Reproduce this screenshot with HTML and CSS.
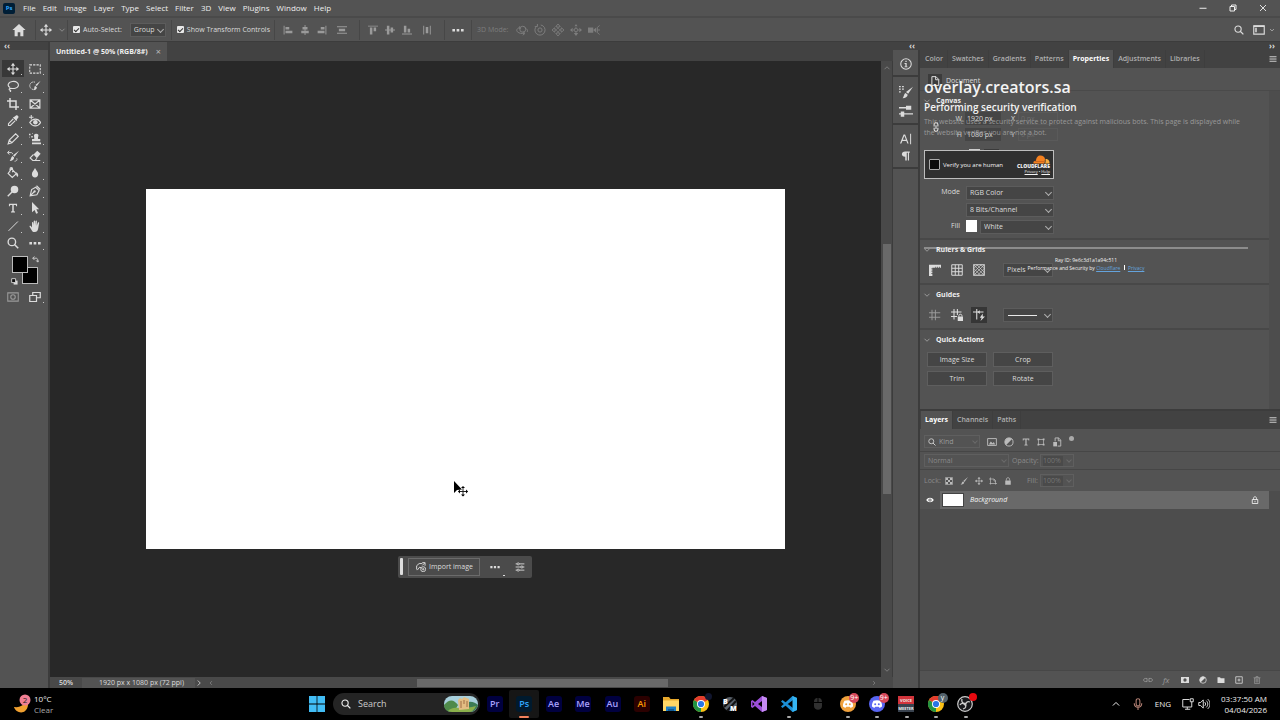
FILE: index.html
```html
<!DOCTYPE html>
<html lang="en">
<head>
  <meta charset="UTF-8" />
  <meta name="viewport" content="width=device-width, initial-scale=1.0"/>
  <title>Untitled-1 @ 50% (RGB/8#)</title>
  <link rel="stylesheet" href="styles.css">
</head>
<body>

<!-- icon sprite -->
<svg class="sprite" xmlns="http://www.w3.org/2000/svg" aria-hidden="true">
  <symbol id="home" viewBox="0 0 16 16"><path d="M8 1 0.500 8H3v7h3.500v-4.500h3V15H13V8h2.500z" fill="currentColor"/></symbol>
  <symbol id="move" viewBox="0 0 16 16"><path d="M8 1v14M1 8h14" stroke="currentColor" stroke-width="1.500"/><path d="M8 0 5 3.500h6zM8 16l-3-3.500h6zM0 8l3.500-3v6zM16 8l-3.500-3v6z" fill="currentColor"/></symbol>
  <symbol id="chev" viewBox="0 0 16 16"><path d="M3 5.500 8 10.500l5-5" fill="none" stroke="currentColor" stroke-width="1.600"/></symbol>
  <symbol id="al-left" viewBox="0 0 16 16"><path d="M1 1h1.500v14H1zM4 3h6v4H4zM4 9h11v4H4z" fill="currentColor"/></symbol>
  <symbol id="al-center" viewBox="0 0 16 16"><path d="M7.300 0h1.500v16H7.300zM4 3h8v4H4zM2 9h12v4H2z" fill="currentColor"/></symbol>
  <symbol id="al-right" viewBox="0 0 16 16"><path d="M13.500 1H15v14h-1.500zM6 3h6v4H6zM1 9h11v4H1z" fill="currentColor"/></symbol>
  <symbol id="dist-h" viewBox="0 0 16 16"><path d="M0 2h16v1.500H0zM3 6h10v4H3zM0 12.500h16V14H0z" fill="currentColor"/></symbol>
  <symbol id="al-top" viewBox="0 0 16 16"><path d="M0 1h16v1.500H0zM3 4h4v11H3zM9 4h4v6H9z" fill="currentColor"/></symbol>
  <symbol id="al-mid" viewBox="0 0 16 16"><path d="M0 7.300h16v1.500H0zM3 1h4v14H3zM9 4h4v8H9z" fill="currentColor"/></symbol>
  <symbol id="al-bot" viewBox="0 0 16 16"><path d="M0 13.500h16V15H0zM3 1h4v11H3zM9 6h4v6H9z" fill="currentColor"/></symbol>
  <symbol id="dist-v" viewBox="0 0 16 16"><path d="M2 1h1.500v14H2zM6 3h4v10H6zM12.500 1H14v14h-1.500z" fill="currentColor"/></symbol>
  <symbol id="dots" viewBox="0 0 16 16"><path d="M0.500 6.500h3.500v3.500H0.500zM6.200 6.500h3.500v3.500H6.200zM12 6.500h3.500v3.500H12z" fill="currentColor"/></symbol>
  <symbol id="orbit" viewBox="0 0 16 16"><g fill="none" stroke="currentColor" stroke-width="1.300"><circle cx="9" cy="7" r="4"/><path d="M4.500 5C1 6 0 8.500 2 10.500s6 2.500 9 2M12 5.500c3 1 4 3 3 5"/><path d="m9 10 3 2.500-3 2.500M5 3l-1 2.500 2.500 1"/></g></symbol>
  <symbol id="roll" viewBox="0 0 16 16"><g fill="none" stroke="currentColor" stroke-width="1.300"><circle cx="8" cy="8" r="2.800"/><path d="M4 2.500a6.800 6.800 0 1 0 5-1.200M4.500 0v3.500H1"/></g></symbol>
  <symbol id="pan" viewBox="0 0 16 16"><path d="m8 0 3 3.500H9v2L8 6.500l-1-1v-2H5zM8 16l3-3.500H9v-2L8 9.500l-1 1v2H5zM0 8l3.500-3v2h2l1 1-1 1h-2v2zM16 8l-3.500-3v2h-2l-1 1 1 1h2v2z" fill="none" stroke="currentColor" stroke-width="1.200"/></symbol>
  <symbol id="slide" viewBox="0 0 16 16"><path d="m8 0 2 3H6zM8 16l3-4H5zM0 8l3.500-3v6zM16 8l-3.500-3v6z" fill="currentColor"/><path d="m8 5 3 3-3 3-3-3z" fill="none" stroke="currentColor" stroke-width="1.400"/></symbol>
  <symbol id="cam" viewBox="0 0 16 16"><path d="M0 4.500h7v7H0zM7 8l4-3.500v7z" fill="currentColor"/><path d="m15.500 2-3 2.500v7l3 2.500M12.500 8H16" fill="none" stroke="currentColor" stroke-width="1.200"/></symbol>
  <symbol id="search" viewBox="0 0 16 16"><circle cx="6.500" cy="6.500" r="5" fill="none" stroke="currentColor" stroke-width="1.800"/><path d="m10 10 5 5" stroke="currentColor" stroke-width="2"/></symbol>
  <symbol id="workspace" viewBox="0 0 16 16"><path d="M1 2.500h14v11H1z" fill="none" stroke="currentColor" stroke-width="1.500"/><path d="M3 5h2v6H3zM1 2h14v2H1z" fill="currentColor"/></symbol>
  <symbol id="marquee" viewBox="0 0 16 16"><path d="M1 2.500h14v11H1z" fill="none" stroke="currentColor" stroke-width="1.400" stroke-dasharray="3 1.500"/></symbol>
  <symbol id="lasso" viewBox="0 0 16 16"><path d="M4 10C0 8 1 3 7 2s9 3 8 6-6 4-10 3c-2 0-3 2-1 2.500 1.500.5 1 1.500 0 2.500" fill="none" stroke="currentColor" stroke-width="1.500"/></symbol>
  <symbol id="quicksel" viewBox="0 0 16 16"><path d="M8 3a5 5 0 1 0-1 9.500" fill="none" stroke="currentColor" stroke-width="1.300" stroke-dasharray="2 1"/><path d="m15.500 1-5 7-2-1.500zM8 7.500l2.500 2c0 2.500-2 4-4.500 4 1.500-1 .5-4 2-6z" fill="currentColor"/></symbol>
  <symbol id="crop" viewBox="0 0 16 16"><path d="M4 0v12h12M0 4h12v12" fill="none" stroke="currentColor" stroke-width="2"/></symbol>
  <symbol id="frame" viewBox="0 0 16 16"><path d="M1.500 2.500h13v11h-13zM2 3l12 10M14 3 2 13" fill="none" stroke="currentColor" stroke-width="1.600"/></symbol>
  <symbol id="dropper" viewBox="0 0 16 16"><path d="m9 3 4 4M8.500 5 2 11.500V14h2.500L11 7.500" fill="none" stroke="currentColor" stroke-width="1.500"/><path d="m8 3 1.500-.5L12 .5c2-1 4 1 3 3l-2 2.500-.5 2z" fill="currentColor"/></symbol>
  <symbol id="redeye" viewBox="0 0 16 16"><path d="M1 10c4-6 11-6 14.500 0-3.500 6-10.500 6-14.500 0z" fill="none" stroke="currentColor" stroke-width="1.600"/><circle cx="8.500" cy="9.500" r="3" fill="currentColor"/><path d="M3 0v6M0 3h6" stroke="currentColor" stroke-width="1.400"/></symbol>
  <symbol id="pencil" viewBox="0 0 16 16"><path d="m1.500 14.500 1.500-5L11.500 1l3.500 3.500L6.500 13zM3 9.500 6.500 13" fill="none" stroke="currentColor" stroke-width="1.500"/></symbol>
  <symbol id="stamp" viewBox="0 0 16 16"><path d="M9.500 1c3 0 4 2 2.500 4.500V8h3v3H4V8h3V5.500C6 3 7 1 9.500 1zM4 12.500h12V15H4z" fill="currentColor"/><path d="M0 1h2v2H0zM3 4h2v2H3zM0 5h1v1H0zM4 0h1v1H4z" fill="currentColor"/></symbol>
  <symbol id="histbrush" viewBox="0 0 16 16"><path d="m16 1-6 8-2-2zM7.500 8l2 2c0 3-2.500 4.500-6 4.500 2-1.500 1.500-5 4-6.500z" fill="currentColor"/><path d="M1 3.500h4.500c1 0 2 .5 2 2M3 1 .8 3.500 3 6" fill="none" stroke="currentColor" stroke-width="1.300"/><path d="M10 15c3 0 4-2 3-4" fill="none" stroke="currentColor"/></symbol>
  <symbol id="eraser" viewBox="0 0 16 16"><path d="m6 6 5-5 4.500 4-5 6z" fill="currentColor"/><path d="M6 6 1.500 10.500 5 14h3l2.500-3M8 14h7" fill="none" stroke="currentColor" stroke-width="1.500"/></symbol>
  <symbol id="bucket" viewBox="0 0 16 16"><path d="M6 2.500 12.500 9 7 14 1.500 8.500zM4 7V3c0-3 3.500-3 3.500 0v4" fill="none" stroke="currentColor" stroke-width="1.500"/><path d="M12 7c3 1 3.500 4 2.500 6-2 .5-2.500-3-2.500-6z" fill="currentColor"/></symbol>
  <symbol id="drop" viewBox="0 0 16 16"><path d="M8 0c2 4 5 6 5 10 0 3-2 5-5 5s-5-2-5-5c0-4 3-6 5-10z" fill="currentColor"/></symbol>
  <symbol id="dodge" viewBox="0 0 16 16"><circle cx="10" cy="6" r="5" fill="currentColor"/><path d="m7 9-6 6" stroke="currentColor" stroke-width="2"/></symbol>
  <symbol id="pen" viewBox="0 0 16 16"><path d="m1.500 14.500 2-8.500L9 3l4.500 4.500-3 5.500zM1.500 14.500 7 9M10 1l5 5" fill="none" stroke="currentColor" stroke-width="1.500"/><circle cx="7.500" cy="8.500" r="1.500" fill="currentColor"/></symbol>
  <symbol id="type" viewBox="0 0 16 16"><path d="M1.500 1h13v4H13l-.5-2H9.200v10l2 .6V15H4.800v-1.400l2-.6V3H3.500L3 5H1.500z" fill="currentColor"/></symbol>
  <symbol id="arrow" viewBox="0 0 16 16"><path d="m4 0 9.500 9.500H9.800L12 14.500l-2.500 1-2-5L4 13.500z" fill="currentColor"/></symbol>
  <symbol id="line" viewBox="0 0 16 16"><path d="M2 14.500 14.500 2" stroke="currentColor" stroke-width="1.300"/></symbol>
  <symbol id="hand" viewBox="0 0 16 16"><path d="M4 8V3.500c0-1.200 1.600-1.200 1.800 0L6.300 7V1.500c0-1.200 1.800-1.200 1.900 0V7l.6-5.500c.2-1.200 1.800-1 1.700.2L10.300 7.500l1.500-4c.5-1.200 2-.6 1.700.6L12.500 10c-.5 4-2 6-5 6-2.500 0-3.500-1.500-4.500-3.500L.8 9C.2 7.800 1.600 7 2.500 8L4 10z" fill="currentColor"/></symbol>
  <symbol id="swap" viewBox="0 0 16 16"><path d="M2 5h7c3 0 4 2 4 4v4M5.500 1 1.500 5l4 4M9.500 10l3.500 4 3-4" fill="none" stroke="currentColor" stroke-width="2"/></symbol>
  <symbol id="defaults" viewBox="0 0 16 16"><path d="M6 6h9v9H6z" fill="currentColor"/><path d="M1.500 1.500h9v9h-9z" fill="#111" stroke="currentColor" stroke-width="2"/></symbol>
  <symbol id="quickmask" viewBox="0 0 16 16"><path d="M1 2.500h14v11H1z" fill="none" stroke="currentColor" stroke-width="1.400"/><circle cx="8" cy="8" r="3" fill="none" stroke="currentColor" stroke-width="1.500"/></symbol>
  <symbol id="screens" viewBox="0 0 16 16"><path d="M5 2h10v7H5z" fill="none" stroke="currentColor" stroke-width="1.600"/><path d="M1 6h9v8H1z" fill="#535353" stroke="currentColor" stroke-width="1.600"/></symbol>
  <symbol id="info" viewBox="0 0 16 16"><circle cx="8" cy="8" r="7" fill="none" stroke="currentColor" stroke-width="1.400"/><path d="M7.200 3.500h1.700v1.700H7.200zM6 6.700h2.900v4.500H10v1.200H6v-1.200h1.200V8H6z" fill="currentColor"/></symbol>
  <symbol id="brushes" viewBox="0 0 16 16"><path d="m16 2-5.500 8-2.500-2zM7.500 9l2.500 2c-.5 2.500-2.500 4-6 4 2-1.500 1-4.500 3.500-6zM0 1h2v1.500H0zM3.500 1h2v1.500h-2zM0 4h2v1.500H0zM3.500 4h2v1.500h-2zM0 7h2v1.500H0z" fill="currentColor"/></symbol>
  <symbol id="brushset" viewBox="0 0 16 16"><path d="M0 3.500h8V2h6v4.500H8V5H0zM0 10.500h2V8.500h4v2h10V12H6v2.500H2V12H0z" fill="currentColor"/></symbol>
  <symbol id="char" viewBox="0 0 16 16"><path d="M0 14 4.800 2h2L11.500 14H9.800l-1.300-3.500H3.200L1.800 14zm3.700-5H8L5.800 3.500zM13.500 1h1.300v14h-1.300z" fill="currentColor"/></symbol>
  <symbol id="para" viewBox="0 0 16 16"><path d="M13 2H7C1 2 1 9 7 9v5h2V3.500h1.500V14h1.500V3.500h1z" fill="currentColor"/></symbol>
  <symbol id="doc" viewBox="0 0 16 16"><path d="M3 1h6.500L14 5.500V15H3zM9 1v5h5" fill="none" stroke="currentColor" stroke-width="1.600"/></symbol>
  <symbol id="link" viewBox="0 0 16 16"><path d="M5 7V4c0-4 6-4 6 0v3M5 9v3c0 4 6 4 6 0V9M8 5v6" fill="none" stroke="currentColor" stroke-width="1.800"/></symbol>
  <symbol id="ruler" viewBox="0 0 16 16"><path d="M0 1h16v4h-1.500V3.500h-1V5H12V3.500h-1V5H9.500V3.500h-1V5H4.500v1H3v1h1.500v2H3v1h1.500v2H3v1h1.500v3H0z" fill="currentColor"/></symbol>
  <symbol id="grid" viewBox="0 0 16 16"><path d="M1 1h14v14H1zM5.700 1v14M10.300 1v14M1 5.700h14M1 10.300h14" fill="none" stroke="currentColor" stroke-width="1.300"/></symbol>
  <symbol id="checker" viewBox="0 0 16 16"><path d="M1 1h14v14H1z" fill="none" stroke="currentColor" stroke-width="1.400"/><path d="m1 6 5-5M1 11 11 1M1 15 15 1M6 15l9-9M11 15l4-4M10 1l5 5M5 1l10 10M1 1l14 14M1 6l9 9M1 11l4 4" stroke="currentColor" stroke-width=".8"/></symbol>
  <symbol id="guides" viewBox="0 0 16 16"><path d="M4 1v14M8.500 1v14M0 5h15M0 11h15" stroke="currentColor" stroke-width="1.300"/></symbol>
  <symbol id="guidelock" viewBox="0 0 16 16"><path d="M4 0v14M8.500 0v8M0 4h14M0 10h8" stroke="currentColor" stroke-width="1.400"/><path d="M9 10h7v6H9z" fill="currentColor"/><path d="M10.500 10V8.500c0-2 4-2 4 0V10" fill="none" stroke="currentColor" stroke-width="1.300"/></symbol>
  <symbol id="smart" viewBox="0 0 16 16"><path d="M5 0v14M0 4h14" fill="none" stroke="currentColor" stroke-width="1.400"/><path d="M9 1.500v5L6 4z" fill="currentColor"/><path d="m13 6-4 5.500h2.500L10 16l6-6h-3z" fill="currentColor"/></symbol>
  <symbol id="image" viewBox="0 0 16 16"><path d="M1 2.500h14v11H1z" fill="none" stroke="currentColor" stroke-width="1.500"/><path d="m3 12 3-5 3 3 2-2 2 4z" fill="currentColor"/></symbol>
  <symbol id="adjust" viewBox="0 0 16 16"><circle cx="8" cy="8" r="6.500" fill="none" stroke="currentColor" stroke-width="1.500"/><path d="M12.600 3.400A6.500 6.500 0 0 0 3.400 12.600z" fill="currentColor"/></symbol>
  <symbol id="shape" viewBox="0 0 16 16"><path d="M3 3h10v10H3z" fill="none" stroke="currentColor" stroke-width="1.400"/><path d="M1 1h3.500v3.500H1zM11.500 1H15v3.500h-3.500zM1 11.500h3.500V15H1zM11.500 11.500H15V15h-3.500z" fill="currentColor"/></symbol>
  <symbol id="smartobj" viewBox="0 0 16 16"><path d="M5 7V1.500h5.500L14 5v9.500H9M10 1v5h4" fill="none" stroke="currentColor" stroke-width="1.500"/><path d="M2 8h6v7H2z" fill="currentColor"/></symbol>
  <symbol id="pixels" viewBox="0 0 16 16"><path d="M1 1h14v14H1z" fill="none" stroke="currentColor" stroke-width="1.300"/><path d="M2 2h4v4H2zM10 2h4v4h-4zM6 6h4v4H6zM2 10h4v4H2zM10 10h4v4h-4z" fill="currentColor"/></symbol>
  <symbol id="brush" viewBox="0 0 16 16"><path d="m16 0-7 10-2.500-2zM6 9l2.500 2.200C8 14 5 15.500 1 15.500 4 14 3 10 6 9z" fill="currentColor"/></symbol>
  <symbol id="artboard" viewBox="0 0 16 16"><path d="M3 1v14M0 4h10l3 3v8M1 13h15M10 4v4h4" fill="none" stroke="currentColor" stroke-width="1.400"/></symbol>
  <symbol id="lock" viewBox="0 0 16 16"><path d="M2.500 7h11v8.500h-11z" fill="currentColor"/><path d="M4.800 7V4.500c0-4 6.400-4 6.400 0V7" fill="none" stroke="currentColor" stroke-width="1.700"/></symbol>
  <symbol id="lock-o" viewBox="0 0 16 16"><path d="M2.500 7h11v8h-11zM5 7V4.500c0-4 6-4 6 0V7M8 9.500v3" fill="none" stroke="currentColor" stroke-width="1.700"/></symbol>
  <symbol id="eye" viewBox="0 0 16 16"><path d="M.5 8C4 2 12 2 15.500 8 12 14 4 14 .5 8z" fill="currentColor"/><circle cx="8" cy="8" r="3.200" fill="#535353"/><circle cx="8" cy="8" r="1.500" fill="currentColor"/></symbol>
  <symbol id="chain" viewBox="0 0 16 16"><path d="M7 5.500H4c-4 0-4 5 0 5h3M9 5.500h3c4 0 4 5 0 5H9M5 8h6" fill="none" stroke="currentColor" stroke-width="1.400"/></symbol>
  <symbol id="mask" viewBox="0 0 16 16"><path fill-rule="evenodd" d="M0 2h16v12H0zM8 4.700a3.300 3.300 0 1 0 0 6.600 3.300 3.300 0 0 0 0-6.600z" fill="currentColor"/></symbol>
  <symbol id="folder" viewBox="0 0 16 16"><path d="M1 2.500h5l1.500 2H15V14H1z" fill="currentColor"/></symbol>
  <symbol id="plus" viewBox="0 0 16 16"><path d="M1.500 1.500h13v13h-13zM8 5v6M5 8h6" fill="none" stroke="currentColor" stroke-width="1.600"/></symbol>
  <symbol id="trash" viewBox="0 0 16 16"><path d="M3 4h10v11H3zM1 3.500h14M6 3V1h4v2M6 6v7M8 6v7M10 6v7" fill="none" stroke="currentColor" stroke-width="1.300"/></symbol>
  <symbol id="import" viewBox="0 0 16 16"><path d="M1 12V6l4-3.500h5M2 13l4-5 3 2M10 1h4.500v5M14 1.500l-4 4" fill="none" stroke="currentColor" stroke-width="1.500"/><circle cx="11.500" cy="11.500" r="4" fill="none" stroke="currentColor" stroke-width="1.400"/><path d="M11.500 9.500v4M9.500 11.500h4" stroke="currentColor" stroke-width="1.300"/></symbol>
  <symbol id="sliders" viewBox="0 0 16 16"><path d="M1 3h14M1 8h14M1 13h14" stroke="currentColor" stroke-width="1.400"/><g fill="#464646" stroke="currentColor" stroke-width="1.300"><circle cx="5" cy="3" r="1.700"/><circle cx="11" cy="8" r="1.700"/><circle cx="5" cy="13" r="1.700"/></g></symbol>
  <symbol id="burger" viewBox="0 0 16 16"><path d="M1 3h14M1 6.300h14M1 9.600h14M1 13h14" stroke="currentColor" stroke-width="2"/></symbol>
  <symbol id="chrome" viewBox="0 0 16 16"><circle cx="8" cy="8" r="8" fill="#fbc116"/><path d="M8 8 8 16A8 8 0 0 1 1.070 4z" fill="#229342"/><path d="M1.070 4A8 8 0 0 1 14.930 4L8 8z" fill="#e33b2e"/><circle cx="8" cy="8" r="4" fill="#fff"/><circle cx="8" cy="8" r="3.100" fill="#2a75e6"/></symbol>
  <symbol id="discord" viewBox="0 0 16 16"><circle cx="8" cy="8" r="8" fill="currentColor"/><path d="M4.500 4.800C6.500 4 9.500 4 11.500 4.800c1.300 2 1.700 4 1.500 5.700-1 .8-2 1.200-2.700 1.200l-.6-1H6.300l-.6 1c-.8 0-1.700-.4-2.700-1.200-.2-1.800.3-3.800 1.500-5.700z" fill="#fff"/><circle cx="6.200" cy="8.300" r="1" fill="currentColor"/><circle cx="9.800" cy="8.300" r="1" fill="currentColor"/></symbol>
</svg>

<header>
  <nav class="menubar">
    <span class="ps-logo">Ps</span>
    <a href="#">File</a>
    <a href="#">Edit</a>
    <a href="#">Image</a>
    <a href="#">Layer</a>
    <a href="#">Type</a>
    <a href="#">Select</a>
    <a href="#">Filter</a>
    <a href="#">3D</a>
    <a href="#">View</a>
    <a href="#">Plugins</a>
    <a href="#">Window</a>
    <a href="#">Help</a>
    <div class="window-btns">
      <button aria-label="Minimize"><svg viewBox="0 0 16 16"><path d="M1 8.500h14" stroke="currentColor" stroke-width="2"/></svg></button>
      <button aria-label="Restore"><svg viewBox="0 0 16 16"><path d="M2 5h9v9H2zM5 5V2h9v9h-3" fill="none" stroke="currentColor" stroke-width="2"/></svg></button>
      <button aria-label="Close"><svg viewBox="0 0 16 16"><path d="m2 2 12 12M14 2 2 14" stroke="currentColor" stroke-width="1.800"/></svg></button>
    </div>
  </nav>

  <div class="options">
    <div class="opt-group home"><button aria-label="Home"><svg class="i14"><use href="#home"/></svg></button></div>
    <div class="opt-group tool"><svg class="i12"><use href="#move"/></svg><svg class="i8 dim"><use href="#chev"/></svg></div>
    <div class="opt-group">
      <label class="check"><input type="checkbox" checked> Auto-Select:</label>
      <span class="select group"><select aria-label="Auto-Select"><option>Group</option></select></span>
    </div>
    <div class="opt-group transform">
      <label class="check"><input type="checkbox" checked> Show Transform Controls</label>
    </div>
    <div class="opt-group icons dim">
      <button aria-label="Align left"><svg><use href="#al-left"/></svg></button>
      <button aria-label="Align centers"><svg><use href="#al-center"/></svg></button>
      <button aria-label="Align right"><svg><use href="#al-right"/></svg></button>
      <button class="wide" aria-label="Distribute"><svg><use href="#dist-h"/></svg></button>
    </div>
    <div class="opt-group icons dim">
      <button aria-label="Align top"><svg><use href="#al-top"/></svg></button>
      <button aria-label="Align middle"><svg><use href="#al-mid"/></svg></button>
      <button aria-label="Align bottom"><svg><use href="#al-bot"/></svg></button>
      <button class="wide" aria-label="Distribute vertically"><svg><use href="#dist-v"/></svg></button>
    </div>
    <div class="opt-group more"><button aria-label="More"><svg class="i12"><use href="#dots"/></svg></button></div>
    <div class="opt-group mode3d">
      <span>3D Mode:</span>
      <div class="icons">
        <button aria-label="Orbit"><svg class="i12"><use href="#orbit"/></svg></button>
        <button aria-label="Roll"><svg class="i12"><use href="#roll"/></svg></button>
        <button aria-label="Pan"><svg class="i12"><use href="#pan"/></svg></button>
        <button aria-label="Slide"><svg class="i12"><use href="#slide"/></svg></button>
        <button aria-label="Camera"><svg class="i12"><use href="#cam"/></svg></button>
      </div>
    </div>
    <div class="opt-right">
      <button aria-label="Search"><svg><use href="#search"/></svg></button>
      <button aria-label="Workspace"><svg class="i12"><use href="#workspace"/></svg><svg class="i6"><use href="#chev"/></svg></button>
    </div>
  </div>
</header>

<main>
  <aside class="toolbar">
    <div class="strip-head">‹‹</div>
    <div class="tools">
      <button class="on" aria-label="Move"><svg class="i12"><use href="#move"/></svg></button>
      <button aria-label="Marquee"><svg class="i12"><use href="#marquee"/></svg></button>
      <button aria-label="Lasso"><svg class="i12"><use href="#lasso"/></svg></button>
      <button aria-label="Quick selection"><svg class="i12"><use href="#quicksel"/></svg></button>
      <button aria-label="Crop"><svg class="i12"><use href="#crop"/></svg></button>
      <button class="solo" aria-label="Frame"><svg class="i12"><use href="#frame"/></svg></button>
      <button aria-label="Eyedropper"><svg class="i12"><use href="#dropper"/></svg></button>
      <button aria-label="Red eye"><svg class="i12"><use href="#redeye"/></svg></button>
      <button aria-label="Pencil"><svg class="i12"><use href="#pencil"/></svg></button>
      <button aria-label="Clone stamp"><svg class="i12"><use href="#stamp"/></svg></button>
      <button aria-label="History brush"><svg class="i12"><use href="#histbrush"/></svg></button>
      <button aria-label="Eraser"><svg class="i12"><use href="#eraser"/></svg></button>
      <button aria-label="Paint bucket"><svg class="i12"><use href="#bucket"/></svg></button>
      <button aria-label="Blur"><svg><use href="#drop"/></svg></button>
      <button aria-label="Dodge"><svg class="i12"><use href="#dodge"/></svg></button>
      <button aria-label="Pen"><svg class="i12"><use href="#pen"/></svg></button>
      <button aria-label="Type"><svg><use href="#type"/></svg></button>
      <button aria-label="Path selection"><svg class="i12"><use href="#arrow"/></svg></button>
      <button aria-label="Line"><svg class="i12"><use href="#line"/></svg></button>
      <button aria-label="Hand"><svg class="i12"><use href="#hand"/></svg></button>
      <button class="solo" aria-label="Zoom"><svg class="i12"><use href="#search"/></svg></button>
      <button aria-label="Edit toolbar"><svg class="i12"><use href="#dots"/></svg></button>
    </div>
    <div class="swatches">
      <span class="swatch bg"></span>
      <span class="swatch fg"></span>
      <svg class="swap"><use href="#swap"/></svg>
      <svg class="defaults"><use href="#defaults"/></svg>
    </div>
    <div class="tools modes">
      <button class="solo" aria-label="Quick mask"><svg class="i12 dim"><use href="#quickmask"/></svg></button>
      <button aria-label="Screen mode"><svg class="i12"><use href="#screens"/></svg></button>
    </div>
  </aside>

  <section class="document">
    <div class="doc-tabs">
      <div class="doc-tab">Untitled-1 @ 50% (RGB/8#) <button aria-label="Close tab">×</button></div>
    </div>
    <div class="workarea">
      <div class="stage">
        <div class="artboard">
          <svg class="cursor" viewBox="0 0 16 16"><path d="M1 0v12l3-3 5-.5z"/><path d="M10 6v9M5.500 10.500h9" stroke="#222"/><path d="m10 5 2 2H8zM10 15.500l2-2H8zM5 10.500l2-2v4zM15 10.500l-2-2v4z"/></svg>
          <div class="context-bar">
            <span class="grip"></span>
            <button class="import"><svg><use href="#import"/></svg>Import image</button>
            <button class="more" aria-label="More options"><svg><use href="#dots"/></svg></button>
            <button aria-label="Properties"><svg><use href="#sliders"/></svg></button>
          </div>
        </div>
      </div>
      <div class="vscroll"><svg class="i8 up"><use href="#chev"/></svg><span class="thumb"></span><svg class="i8"><use href="#chev"/></svg></div>
    </div>
    <footer class="status">
      <span class="zoom">50%</span>
      <span class="size">1920 px x 1080 px (72 ppi)</span>
      <svg class="i8 right"><use href="#chev"/></svg>
      <div class="hscroll"><svg class="i6 left"><use href="#chev"/></svg><span class="thumb"></span><svg class="i6 right"><use href="#chev"/></svg></div>
    </footer>
  </section>

  <aside class="dock">
    <div class="dock-head"><span>‹‹</span><span>››</span></div>
    <div class="dock-body">
      <div class="icon-strip">
        <div><svg class="i12"><use href="#info"/></svg></div>
        <div><svg class="i14"><use href="#brushes"/></svg><svg class="i14"><use href="#brushset"/></svg></div>
        <div><svg class="i12"><use href="#char"/></svg><svg class="i12"><use href="#para"/></svg></div>
      </div>

      <div class="panels">
        <section class="panel properties">
          <div class="tabs">
            <button>Color</button>
            <button>Swatches</button>
            <button>Gradients</button>
            <button>Patterns</button>
            <button class="active">Properties</button>
            <button>Adjustments</button>
            <button>Libraries</button>
            <svg class="i8 panel-menu"><use href="#burger"/></svg>
          </div>
          <div class="doc-row"><span class="doc-icon"><svg><use href="#doc"/></svg></span>Document</div>
          <div class="prop-scroll">
            <div class="prop canvas-prop">
              <h3><svg class="i8"><use href="#chev"/></svg>Canvas</h3>
              <div class="dims">
                <svg class="link"><use href="#link"/></svg>
                <label for="cw">W</label><input id="cw" value="1920 px">
                <label for="cx">X</label><input id="cx" class="ghost" value="0 px">
                <label for="ch">H</label><input id="ch" value="1080 px">
                <label for="cy">Y</label><input id="cy" class="ghost" value="0 px">
              </div>
              <div class="orient"><span></span><span></span></div>
              <div class="fields">
                <label for="mode">Mode</label>
                <span class="select"><select id="mode"><option>RGB Color</option></select></span>
                <span class="select second"><select aria-label="Bit depth"><option>8 Bits/Channel</option></select></span>
                <label for="fill">Fill</label>
                <div class="fill-row"><span class="fill-swatch"></span><span class="select"><select id="fill"><option>White</option></select></span></div>
              </div>
            </div>
            <div class="prop">
              <h3><svg class="i8"><use href="#chev"/></svg>Rulers &amp; Grids</h3>
              <div class="icon-row">
                <svg class="i12"><use href="#ruler"/></svg>
                <svg class="i12"><use href="#grid"/></svg>
                <svg class="i12"><use href="#checker"/></svg>
                <span class="select"><select aria-label="Ruler units"><option>Pixels</option></select></span>
              </div>
            </div>
            <div class="prop">
              <h3><svg class="i8"><use href="#chev"/></svg>Guides</h3>
              <div class="icon-row">
                <svg class="i12 dim"><use href="#guides"/></svg>
                <svg class="i12"><use href="#guidelock"/></svg>
                <svg class="i12 on"><use href="#smart"/></svg>
                <span class="select line"><select aria-label="Guide style"><option></option></select></span>
              </div>
            </div>
            <div class="prop">
              <h3><svg class="i8"><use href="#chev"/></svg>Quick Actions</h3>
              <div class="actions">
                <button>Image Size</button>
                <button>Crop</button>
                <button>Trim</button>
                <button>Rotate</button>
              </div>
            </div>
          </div>

          <!-- transparent browser overlay, sits over the panel -->
          <div class="overlay">
            <h1>overlay.creators.sa</h1>
            <h2>Performing security verification</h2>
            <p>This website uses a security service to protect against malicious bots. This page is displayed while the website verifies you are not a bot.</p>
            <div class="verify">
              <label><input type="checkbox"> Verify you are human</label>
              <div class="cf">
                <svg viewBox="0 0 34 18"><path d="M1 17c-1-4 2-6 5-5C6 5 10 1 15 1c5 0 8 3 9 7l-1 9z" fill="#f48120"/><path d="M24 17c2-4 1-6 1-9 5-1 9 4 8 9z" fill="#faad3f"/><path d="M3 13h18l2-2" fill="none" stroke="#a94f18"/></svg>
                <b>CLOUDFLARE</b>
                <span><a href="#">Privacy</a> • <a href="#">Help</a></span>
              </div>
            </div>
            <hr>
            <small>Ray ID: 9e6c3d1a1a94c511</small>
            <small>Performance and Security by <a href="#">Cloudflare</a> <i></i> <a href="#">Privacy</a></small>
          </div>
        </section>

        <section class="panel layers">
          <div class="tabs">
            <button class="active">Layers</button>
            <button>Channels</button>
            <button>Paths</button>
            <svg class="i8 panel-menu"><use href="#burger"/></svg>
          </div>
          <div class="layer-row filter">
            <span class="select kind"><svg class="i8"><use href="#search"/></svg><select aria-label="Filter kind"><option>Kind</option></select></span>
            <div class="filter-icons">
              <svg><use href="#image"/></svg>
              <svg><use href="#adjust"/></svg>
              <svg class="i8"><use href="#type"/></svg>
              <svg class="i8"><use href="#shape"/></svg>
              <svg><use href="#smartobj"/></svg>
            </div>
            <span class="toggle"></span>
          </div>
          <div class="layer-row blend">
            <span class="select"><select aria-label="Blend mode"><option>Normal</option></select></span>
            <label for="opacity">Opacity:</label>
            <span class="select pct"><input id="opacity" value="100%"></span>
          </div>
          <div class="layer-row locks">
            <span>Lock:</span>
            <div class="lock-icons">
              <svg class="i8"><use href="#pixels"/></svg>
              <svg class="i8"><use href="#brush"/></svg>
              <svg class="i8"><use href="#move"/></svg>
              <svg class="i8"><use href="#artboard"/></svg>
              <svg class="i8"><use href="#lock"/></svg>
            </div>
            <label for="fillpct">Fill:</label>
            <span class="select pct"><input id="fillpct" value="100%"></span>
          </div>
          <div class="layer-list">
            <div class="layer">
              <button aria-label="Toggle visibility"><svg class="i8"><use href="#eye"/></svg></button>
              <div class="layer-item"><span class="thumb"></span><em>Background</em><svg class="i8"><use href="#lock-o"/></svg></div>
            </div>
          </div>
          <div class="layer-foot">
            <svg class="dim"><use href="#chain"/></svg>
            <i class="dim">fx</i>
            <svg class="i8"><use href="#mask"/></svg>
            <svg class="i8"><use href="#adjust"/></svg>
            <svg class="i8"><use href="#folder"/></svg>
            <svg class="i8"><use href="#plus"/></svg>
            <svg class="i8 dim"><use href="#trash"/></svg>
          </div>
        </section>
      </div>
    </div>
  </aside>
</main>

<div class="taskbar">
  <div class="weather">
    <svg viewBox="0 0 18 20"><path d="M12 5c1 4-3 9-11 8 2 7 13 8 14-2 0-3-1-5-3-6z" fill="#f0a030"/><circle cx="12" cy="6" r="5.500" fill="#f07f93"/><text x="12" y="9" text-anchor="middle">2</text></svg>
    <div>10°C<br><span>Clear</span></div>
  </div>
  <div class="task-center">
    <button class="start" aria-label="Start"><svg viewBox="0 0 16 16"><path d="M0 0h7.600v7.600H0zM8.400 0H16v7.600H8.400zM0 8.400h7.600V16H0zM8.400 8.400H16V16H8.400z" fill="#42bdf5"/></svg></button>
    <label class="search-box"><svg><use href="#search"/></svg><input type="text" placeholder="Search" aria-label="Search">
      <svg class="castle" viewBox="0 0 34 16"><rect width="34" height="16" rx="8" fill="#a8d0dc"/><path d="M0 9C6 2 10 4 14 9l-4 7H7C3 16 0 13 0 9z" fill="#4f8a4a"/><path d="M20 8c5-4 11-2 14 1-1 4-4 7-8 7h-8z" fill="#3c7c56"/><path d="M4 15C9 9 18 14 32 10c-2 4-4 6-7 6H8z" fill="#8bb04c"/><path d="M14 4l2-2 2 1 2-2 5 2v10l-10 1z" fill="#e3bd83"/><path d="M17 5v7M20 4v4M23 5v6" stroke="#a06d45"/></svg>
    </label>
    <div class="apps">
      <a href="#" class="adobe pr">Pr</a>
      <a href="#" class="adobe psd current">Ps</a>
      <a href="#" class="adobe ae">Ae</a>
      <a href="#" class="adobe ae">Me</a>
      <a href="#" class="adobe ae">Au</a>
      <a href="#" class="adobe ai">Ai</a>
      <a href="#" aria-label="Files"><svg viewBox="0 0 16 16"><path d="M0 1h6l1.500 2H16v12H0z" fill="#e8a92c"/><path d="M0 4.500h16V15H0z" fill="#ffd766"/><path d="M3 10.500h10V15H3z" fill="#1f7fc4"/><path d="M5 13h6v2H5z" fill="#0f5a94"/></svg></a>
      <a href="#" class="open" aria-label="Chrome"><svg><use href="#chrome"/></svg><span class="badge dark"></span></a>
      <a href="#" aria-label="BM"><svg viewBox="0 0 16 16"><circle cx="8" cy="8" r="7" fill="#58606a"/><path d="m2 11 10-9M5 15 14 5" stroke="#111" stroke-width="2"/><text class="bm" x="1" y="8">B</text><text class="bm" x="8" y="15">M</text></svg></a>
      <a href="#" aria-label="Visual Studio"><svg viewBox="0 0 16 16"><path d="M11 0 16 2v12l-5 2L4 10l-2.500 2L0 11V5l1.500-1L4 6zM11 5 7 8l4 3zM1.500 6v4l2-2z" fill="#9b4fd8" fill-rule="evenodd"/><path d="M11 0 16 2v12l-5 2z" fill="#c58af3"/></svg></a>
      <a href="#" class="open" aria-label="VS Code"><svg viewBox="0 0 16 16"><path d="M11.500 0 16 2v12l-4.500 2L0 5.500 1.500 4 12 12V4L1.500 12 0 10.500z" fill="#1c8fd6"/><path d="M11.500 0 16 2v12l-4.500 2z" fill="#35b4f2"/></svg></a>
      <a href="#" aria-label="Mouse"><svg viewBox="0 0 16 16"><path d="M4 7h8v3c0 5-8 5-8 0zM4 6c0-4 3-4 3.500-4v4zM12 6c0-4-3-4-3.500-4v4z" fill="#303030"/></svg></a>
      <a href="#" class="open orange" aria-label="Discord PTB"><svg><use href="#discord"/></svg><span class="badge">9+</span></a>
      <a href="#" class="open blurple" aria-label="Discord"><svg><use href="#discord"/></svg><span class="badge">9+</span></a>
      <a href="#" class="open" aria-label="Voicemeeter"><svg viewBox="0 0 16 16"><path d="M0 0h16v8H0z" fill="#d2343b"/><path d="M0 8h16v8H0z" fill="#39424e"/><text class="vm" x="8" y="6" text-anchor="middle">VOICE</text><text class="vm" x="8" y="14" text-anchor="middle">MEETER</text></svg></a>
      <a href="#" class="open" aria-label="Chrome profile"><svg><use href="#chrome"/></svg><span class="badge grey">y</span></a>
      <a href="#" class="open" aria-label="OBS"><svg viewBox="0 0 16 16"><circle cx="8" cy="8" r="7.300" fill="#17181b" stroke="#ccc" stroke-width="1.200"/><path d="M5 3c-1 3 1 5 4 4M13 6c-3-1-5 1-4 4M6 13c3-1 4-3 1-5M3 9c1-2 3-2 4-1" fill="none" stroke="#ccc" stroke-width="1.300"/></svg><span class="badge rec"></span></a>
    </div>
  </div>
  <div class="tray">
    <svg class="up"><use href="#chev"/></svg>
    <svg class="i12 mic" viewBox="0 0 16 16"><path d="M5.500 8V3.500c0-3.500 5-3.500 5 0V8c0 3.500-5 3.500-5 0zM3 7c0 7 10 7 10 0M8 12.500V16" fill="none" stroke="#b98578" stroke-width="1.400"/></svg>
    <span>ENG</span>
    <div class="net">
      <svg class="i12" viewBox="0 0 16 16"><path d="M10 2H1v10h12V8M4 15h7M7 12v3M11 1h4v4h-4zM13 5v3" fill="none" stroke="#ddd" stroke-width="1.300"/></svg>
      <svg class="i12" viewBox="0 0 16 16"><path d="M1 6v4h2.500L7 13.500v-11L3.500 6zM9 5.500c1.500 1.500 1.500 3.500 0 5M11 3.500c2.700 2.700 2.700 6.300 0 9M13 1.500c4 4 4 9 0 13" fill="none" stroke="#ddd" stroke-width="1.300"/></svg>
    </div>
    <div class="clock">03:37:50 AM<br>04/04/2026</div>
  </div>
</div>

</body>
</html>
```
FILE: styles.css
```css
:root {
  --panel: #535353;
  --dark: #424242;
  --line: #3c3c3c;
  --field: #454545;
  --text: #dcdcdc;
  --dim: #9a9a9a;
}

* { box-sizing: border-box; }

body {
  margin: 0;
  height: 100vh;
  display: flex;
  flex-direction: column;
  overflow: hidden;
  font: 7px/10px "Open Sans", "Noto Sans", sans-serif;
  color: var(--text);
  background: var(--panel);
}

button, input, select {
  font: inherit;
  color: inherit;
  background: none;
  border: 0;
  padding: 0;
  margin: 0;
  min-width: 0;
}

button {
  display: flex;
  align-items: center;
  justify-content: center;
}

select { appearance: none; width: 100%; outline: none; }

a { color: inherit; text-decoration: none; }

h1, h2, h3, p { margin: 0; }

svg { width: 10px; height: 10px; flex: none; display: block; }
svg.i6 { width: 6px; height: 6px; }
svg.i8 { width: 8px; height: 8px; }
svg.i12 { width: 12px; height: 12px; }
svg.i14 { width: 14px; height: 14px; }

.sprite { display: none; }
.dim { color: var(--dim); }
.up { transform: rotate(180deg); }
.left { transform: rotate(90deg); }
.right { transform: rotate(-90deg); }

/* menu bar */
.menubar {
  display: flex;
  align-items: center;
  gap: 7px;
  height: 16px;
  padding: 0 2px 0 3px;
  font-size: 8px;
  color: #eee;
}

.ps-logo {
  width: 12px;
  height: 11px;
  margin-right: 1px;
  border-radius: 2px;
  background: #001e36;
  color: #31a8ff;
  font-size: 6px;
  font-weight: bold;
  text-align: center;
}

.window-btns { margin-left: auto; display: flex; }
.window-btns button { width: 30px; height: 14px; }
.window-btns svg { width: 8px; height: 8px; }

/* options bar */
.options {
  display: flex;
  align-items: center;
  height: 26px;
  border-top: 2px solid #4a4a4a;
  border-bottom: 1px solid var(--line);
}

.opt-group {
  display: flex;
  align-items: center;
  height: 20px;
  padding: 0 5px;
  border-right: 1px solid #474747;
}

.opt-group.home { padding: 0 9px 0 12px; }
.opt-group.tool { gap: 6px; padding: 0 1px 0 4px; }
.opt-group.transform { padding-right: 4px; }
.opt-group.more { padding: 0 7px; }
.icons { display: flex; padding: 0 5px; }
.icons button { width: 17px; height: 16px; }
.icons .wide { width: 23px; }
.mode3d { border: 0; color: #7d7d7d; }
.mode3d .icons button { width: 18px; }

.check { display: flex; align-items: center; gap: 3px; white-space: nowrap; }

.check input {
  appearance: none;
  width: 7px;
  height: 7px;
  border-radius: 1px;
  background: #e8e8e8;
}

.check input:checked::before {
  content: "";
  display: block;
  width: 4px;
  height: 2px;
  margin: 2px 1px;
  border: solid #333;
  border-width: 0 0 1px 1px;
  transform: rotate(-45deg);
}

.opt-right { margin-left: auto; display: flex; gap: 9px; padding-right: 5px; }
.opt-right button { gap: 4px; }

/* drop-downs */
.select {
  position: relative;
  display: flex;
  align-items: center;
  height: 14px;
  padding-left: 3px;
  background: var(--field);
  border: 1px solid #5c5c5c;
}

.select::after {
  content: "";
  position: absolute;
  right: 2px;
  top: 3px;
  width: 4px;
  height: 4px;
  border: solid #b0b0b0;
  border-width: 0 1px 1px 0;
  transform: rotate(45deg);
  pointer-events: none;
}

.select.group { width: 36px; margin-left: 8px; }

main { flex: 1; min-height: 0; display: flex; background: var(--line); }

/* left toolbar */
.toolbar {
  width: 48px;
  margin-right: 2px;
  background: var(--panel);
}

.strip-head, .dock-head {
  height: 8px;
  padding: 0 4px;
  background: var(--dark);
  font-size: 8px;
  line-height: 7px;
  font-weight: bold;
}

.tools {
  display: grid;
  grid-template-columns: 22px 22px;
  grid-template-rows: repeat(11, 1fr);
  height: 192px;
  margin: 10px 2px 0;
}

.tools button { position: relative; }
.tools .on { background: #383838; }

.tools button:not(.solo)::after {
  content: "";
  position: absolute;
  right: 2px;
  bottom: 2px;
  width: 1px;
  height: 1px;
  background: #ccc;
}

.swatches { position: relative; height: 32px; margin: 4px 6px 0 8px; }
.swatch { position: absolute; width: 16px; height: 17px; background: #000; border: 1px solid #bbb; }
.swatch.fg { left: 4px; top: 0; }
.swatch.bg { left: 14px; top: 11px; }
.swap { position: absolute; width: 7px; height: 7px; left: 24px; top: 0; }
.defaults { position: absolute; width: 7px; height: 7px; left: 3px; top: 22px; }

.tools.modes { grid-template-rows: 16px; height: 16px; margin-top: 1px; }

/* document window */
.document { flex: 1; min-width: 0; display: flex; flex-direction: column; }
.doc-tabs { height: 19px; display: flex; background: var(--dark); }

.doc-tab {
  display: flex;
  align-items: center;
  gap: 8px;
  padding: 0 6px;
  background: var(--panel);
  color: #f0f0f0;
  font-weight: bold;
}

.doc-tab button { font-size: 9px; font-weight: normal; color: #bbb; }

.workarea { flex: 1; display: flex; min-height: 0; }

.stage {
  flex: 1;
  display: flex;
  align-items: center;
  justify-content: center;
  background: #282828;
}

.artboard {
  position: relative;
  width: 77%;
  aspect-ratio: 16 / 9;
  background: #fff;
}

.cursor { position: absolute; left: 48%; top: 81%; width: 16px; height: 16px; }

.context-bar {
  position: absolute;
  top: calc(100% + 7px);
  left: 50%;
  transform: translateX(-50%);
  display: flex;
  align-items: center;
  gap: 5px;
  height: 22px;
  padding: 2px;
  border-radius: 2px;
  background: #4b4b4b;
}

.grip { width: 3px; height: 17px; border-radius: 1px; background: #ddd; }
.context-bar button { height: 18px; width: 20px; position: relative; }
.context-bar .import { width: 72px; gap: 3px; border: 1px solid #6b6b6b; white-space: nowrap; }
.context-bar .more::after { content: ""; position: absolute; right: 0; bottom: 0; width: 2px; height: 1px; background: #ddd; }

.vscroll {
  width: 11px;
  margin-right: 1px;
  display: flex;
  flex-direction: column;
  align-items: center;
  justify-content: space-between;
  padding: 3px 0;
  background: #494949;
  color: #888;
}

.vscroll .thumb { width: 8px; height: 41%; background: #696969; }

.status { display: flex; align-items: center; height: 11px; background: #494949; }
.zoom { width: 32px; padding-left: 9px; font-weight: 600; }
.size { width: 113px; padding-left: 17px; background: var(--panel); white-space: nowrap; }
.hscroll { flex: 1; display: flex; justify-content: space-between; align-items: center; margin-left: 5px; padding-right: 16px; color: #999; }
.hscroll .thumb { width: 251px; height: 8px; background: #696969; }

/* right dock */
.dock { width: 387px; flex: none; display: flex; flex-direction: column; }
.dock-head { display: flex; justify-content: space-between; padding: 0 5px 0 16px; }
.dock-body { flex: 1; min-height: 0; display: flex; gap: 2px; }
.icon-strip { width: 25px; background: var(--panel); }

.icon-strip div {
  display: flex;
  flex-direction: column;
  align-items: center;
  gap: 5px;
  padding: 8px 0 5px;
  border-bottom: 2px solid var(--line);
}

.panels { flex: 1; min-width: 0; display: flex; flex-direction: column; gap: 2px; }
.panel { background: var(--panel); }
.properties { position: relative; height: 359px; display: flex; flex-direction: column; }

.tabs { display: flex; height: 18px; flex: none; padding-left: 1px; background: var(--dark); color: #b0b0b0; font-weight: 600; }
.tabs button { padding: 0 4px; border-right: 1px solid #3e3e3e; }
.tabs .active { background: var(--panel); color: #fff; font-weight: bold; }
.panel-menu { margin: 5px 3px 0 auto; color: #aaa; }

.doc-row { display: flex; align-items: center; gap: 4px; height: 23px; flex: none; padding: 3px 0 0 8px; border-bottom: 1px solid #4a4a4a; }
.doc-icon { background: #3c3c3c; padding: 2px; }

.prop-scroll { flex: 1; border-right: 11px solid #4d4d4d; }
.prop { height: 45px; padding: 5px 7px 0 3px; border-bottom: 2px solid #484848; }
.prop:last-child { border: 0; }
.canvas-prop { height: 149px; }

/* section titles stay readable above the overlay's rule */
.prop h3 { position: relative; z-index: 1; display: flex; align-items: center; gap: 5px; font-size: 7px; font-weight: bold; color: #eee; }
.prop h3 svg { color: #aaa; }

.dims {
  display: grid;
  grid-template-columns: 20px 13px 36px 11px 40px;
  align-items: center;
  column-gap: 3px;
  row-gap: 3px;
  margin: 6px 0 0 3px;
}

.dims label { text-align: right; }
.dims input { height: 13px; width: 100%; padding-left: 2px; background: var(--field); }
.dims .ghost { background: none; border: 1px solid #5a5a5a; color: #6c6c6c; }
.dims .link { grid-row: span 2; justify-self: center; }

.orient { display: flex; gap: 4px; height: 14px; padding: 8px 0 0 46px; }
.orient span { width: 11px; height: 6px; border-top: 1px solid #ccc; }
.orient span + span { width: 15px; background: #3a3a3a; border: 0; }

.fields {
  display: grid;
  grid-template-columns: 37px 88px;
  column-gap: 6px;
  row-gap: 3px;
  margin-top: 31px;
}

.fields > label { text-align: right; line-height: 12px; }
.second { grid-column: 2; }
.fill-row { display: flex; gap: 3px; }
.fill-row .select { flex: 1; }
.fill-swatch { width: 11px; height: 12px; background: #fff; }

.icon-row { display: flex; align-items: center; gap: 10px; padding: 8px 0 0 6px; }
.icon-row .select { width: 50px; margin-left: 8px; }
.icon-row .on { background: #363636; outline: 2px solid #363636; }
.line::before { content: ""; position: absolute; left: 4px; top: 6px; width: 29px; height: 1px; background: #e8e8e8; }

.actions { display: grid; grid-template-columns: 60px 60px; gap: 4px 6px; padding: 7px 0 0 4px; }
.actions button { height: 15px; background: var(--field); border: 1px solid #5e5e5e; }

/* overlay */
.overlay { position: absolute; left: 4px; right: 32px; top: 26px; color: #f4f4f4; }
.overlay h1 { font-size: 16px; line-height: 22px; font-weight: 600; }
.overlay h2 { font-size: 10px; line-height: 18px; font-weight: 600; }
.overlay p { line-height: 11px; color: #999; }

.verify {
  display: flex;
  align-items: center;
  justify-content: space-between;
  width: 130px;
  height: 29px;
  margin-top: 12px;
  padding: 0 3px 0 4px;
  background: #303030;
  border: 1px solid #bdbdbd;
  font-size: 6px;
}

.verify label { display: flex; align-items: center; gap: 3px; white-space: nowrap; }
.verify input { appearance: none; width: 11px; height: 11px; border: 1px solid #aaa; border-radius: 1px; background: #0c0c0c; }
.cf { display: flex; flex-direction: column; align-items: flex-end; font-size: 4px; line-height: 6px; }
.cf svg { width: 17px; height: 9px; }
.cf b { font-size: 5px; line-height: 5px; font-weight: 800; }
.cf a { text-decoration: underline; }

.overlay hr { margin: 68px 0 7px; border: 0; height: 2px; background: #8c8c8c; }
.overlay small { display: block; font-size: 5px; line-height: 8px; text-align: center; }
.overlay small a { color: #64a3dc; text-decoration: underline; }
.overlay small i { display: inline-block; width: 1px; height: 5px; margin: 0 2px; background: #fff; }

/* layers */
.layers { flex: 1; display: flex; flex-direction: column; }
.layer-row { display: flex; align-items: center; height: 18px; flex: none; padding-left: 4px; border-bottom: 1px solid #464646; color: #8a8a8a; }
.layer-row .select { background: none; border-color: #5f5f5f; height: 13px; }
.layer-row .select::after { border-color: #6a6a6a; width: 3px; height: 3px; }
.layer-row.filter { height: 23px; padding-top: 3px; }
.kind { width: 56px; gap: 3px; color: #9a9a9a; }
.kind svg { color: #ccc; }
.filter-icons { display: flex; align-items: center; justify-content: space-between; width: 75px; margin-left: 7px; color: #bbb; }
.toggle { width: 5px; height: 5px; margin: 0 0 6px 7px; border-radius: 50%; background: #aaa; }
.blend .select:first-child { width: 85px; }
.blend label { width: 28px; margin-left: 3px; }
.layer-row .pct { width: 34px; padding-left: 2px; }
.pct input { width: 20px; background: #4a4a4a; color: #757575; }
.layer-row.locks { border: 0; height: 21px; }
.locks > span:first-child { width: 16px; }
.lock-icons { display: flex; justify-content: space-between; width: 67px; margin-left: 5px; color: #bbb; }
.locks label { width: 13px; margin-left: 15px; }

.layer-list { flex: 1; background: #4d4d4d; }
.layer { display: flex; height: 18px; padding-right: 11px; }
.layer > button { width: 20px; background: var(--panel); color: #fff; }
.layer-item { flex: 1; display: flex; align-items: center; gap: 7px; padding: 0 10px 0 3px; background: #696969; color: #f4f4f4; }
.layer-item .thumb { width: 20px; height: 12px; background: #fff; outline: 1px solid #444; }
.layer-item svg { margin-left: auto; }

.layer-foot { display: flex; align-items: center; justify-content: flex-end; gap: 10px; height: 18px; padding-right: 19px; border-top: 1px solid #474747; background: var(--panel); }
.layer-foot i { font-size: 8px; width: 8px; }

/* windows taskbar */
.taskbar {
  display: grid;
  grid-template-columns: 1fr auto 1fr;
  align-items: center;
  height: 32px;
  background: #000;
  color: #eee;
  font-size: 8px;
}

.weather { display: flex; align-items: center; gap: 3px; padding-left: 13px; line-height: 11px; }
.weather svg { width: 18px; height: 20px; }
.weather text { font-size: 8px; fill: #222; }
.weather span { color: #aaa; }

.task-center { display: flex; align-items: center; }
.start { width: 33px; height: 32px; }
.start svg { width: 16px; height: 16px; }

.search-box {
  display: flex;
  align-items: center;
  gap: 7px;
  width: 147px;
  height: 22px;
  padding: 0 2px 0 8px;
  border-radius: 11px;
  background: #242424;
}

.search-box input { flex: 1; outline: none; font-size: 9px; }
.search-box input::placeholder { color: #ccc; }
.search-box .castle { width: 34px; height: 16px; }

.apps { display: grid; grid-template-columns: repeat(17, 1fr); width: 500px; }
.apps a { position: relative; display: flex; align-items: center; justify-content: center; height: 28px; }
.apps svg { width: 16px; height: 16px; }

/* isolate keeps the tile behind its two letters */
.adobe { font-size: 9px; font-weight: 600; isolation: isolate; }

.adobe::before {
  content: "";
  position: absolute;
  left: 7px;
  top: 6px;
  width: 16px;
  height: 16px;
  border-radius: 3px;
  background: #00003f;
  z-index: -1;
}

.pr, .ae { color: #a9a2ff; }
.psd { color: #31a8ff; }
.psd::before { background: #001a2e; }
.ai { color: #ff9a00; }
.ai::before { background: #2b0000; }
.current { background: #161616; border-radius: 2px; }

.open::after, .current::after {
  content: "";
  position: absolute;
  bottom: 0;
  left: 13px;
  width: 4px;
  height: 2px;
  border-radius: 1px;
  background: #aaa;
}

.current::after { left: 10px; width: 10px; background: #f2815d; }

.orange { color: #f0a13c; }
.blurple { color: #5865f2; }

.badge {
  position: absolute;
  right: 3px;
  top: 3px;
  width: 10px;
  height: 10px;
  border-radius: 50%;
  background: #d6475a;
  color: #fff;
  font-size: 7px;
  line-height: 10px;
  text-align: center;
}

.badge.dark { width: 7px; height: 7px; background: #10152e; }
.badge.grey { background: #53626c; }
.badge.rec { width: 8px; height: 8px; background: #e8090f; }
.bm { font-size: 7px; font-weight: 800; fill: #fff; }
.vm { font-size: 4px; font-weight: bold; fill: #eee; }

.tray { display: flex; align-items: center; justify-content: flex-end; gap: 11px; padding-right: 13px; }
.net { display: flex; gap: 4px; }
.clock { text-align: right; line-height: 11px; white-space: nowrap; }
```
